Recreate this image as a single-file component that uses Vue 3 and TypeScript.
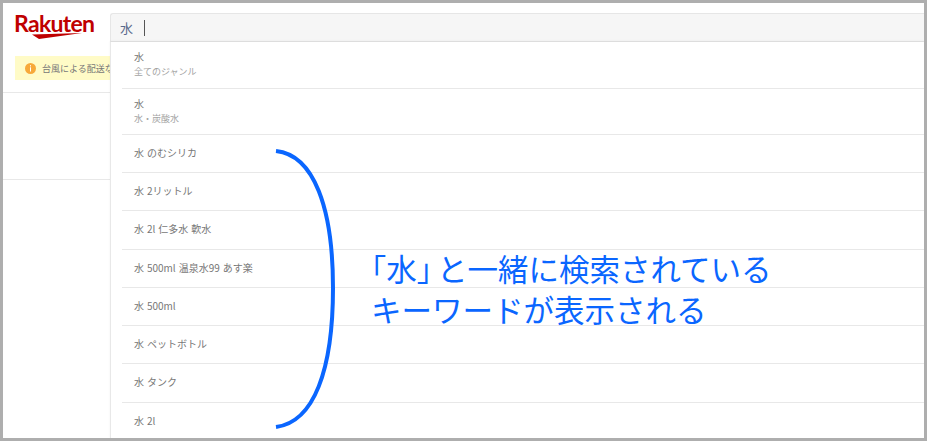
<template>
  <div class="frame">
    <aside class="side">
      <div class="logo">
        <span class="logo-word">Rakuten</span>
        <svg class="logo-bar" width="50" height="7" viewBox="0 0 50 7">
          <polygon points="0,1.5 50,0 7,6" fill="#bf0000" />
        </svg>
      </div>
      <div class="notice">
        <svg class="notice-icon" width="11" height="11" viewBox="0 0 11 11">
          <circle cx="5.5" cy="5.5" r="5.5" fill="#f7a93a" />
          <rect x="5" y="2.2" width="1" height="1.2" fill="#fff" />
          <rect x="5" y="4.3" width="1" height="4.2" fill="#fff" />
        </svg>
        <span class="notice-text">台風による配送な</span>
      </div>
      <div class="side-block"></div>
    </aside>

    <main class="search">
      <div class="search-box">
        <span class="query">水</span>
        <span class="caret"></span>
      </div>
      <ul class="suggest">
        <li
          v-for="item in items"
          :key="item.label + item.sub"
          class="row"
          :class="{ 'row-double': item.sub }"
          :style="{ height: item.h + 'px' }"
        >
          <span class="label">{{ item.label }}</span>
          <span v-if="item.sub" class="sub">{{ item.sub }}</span>
        </li>
      </ul>
    </main>

    <svg class="bracket" width="70" height="290" viewBox="0 0 70 290">
      <path
        d="M2 3 C40 7 59 60 59 140 C59 222 40 274 2 279"
        fill="none"
        stroke="#0a66ff"
        stroke-width="4"
      />
    </svg>
    <p class="note"><span class="bracket-char">「</span>水<span class="bracket-char close">」</span>と一緒に検索されている<br />キーワードが表示される</p>
  </div>
</template>

<script setup lang="ts">
interface Suggestion {
  label: string
  sub?: string
  h: number
}

const items: Suggestion[] = [
  { label: '水', sub: '全てのジャンル', h: 47 },
  { label: '水', sub: '水・炭酸水', h: 46 },
  { label: '水 のむシリカ', h: 38 },
  { label: '水 2リットル', h: 38 },
  { label: '水 2l 仁多水 軟水', h: 39 },
  { label: '水 500ml 温泉水99 あす楽', h: 38 },
  { label: '水 500ml', h: 38 },
  { label: '水 ペットボトル', h: 38 },
  { label: '水 タンク', h: 39 },
  { label: '水 2l', h: 36 },
]
</script>

<style>
html,
body {
  margin: 0;
  overflow: hidden;
}
</style>

<style scoped>
.frame {
  position: relative;
  box-sizing: border-box;
  display: flex;
  width: 927px;
  height: 441px;
  border: 3px solid #aeaeae;
  background: #fff;
  overflow: hidden;
  font-family: "Noto Sans CJK JP", "Noto Sans", sans-serif;
}

.side {
  flex: 0 0 107px;
  min-width: 0;
  display: flex;
  flex-direction: column;
}

.logo {
  height: 53px;
  padding: 8px 0 0 11px;
  box-sizing: border-box;
  position: relative;
}

.logo-word {
  display: block;
  font-family: Lato, "Liberation Sans", sans-serif;
  font-weight: 700;
  font-size: 23px;
  line-height: 24px;
  letter-spacing: -0.7px;
  color: #bf0000;
}

.logo-bar {
  position: absolute;
  left: 29px;
  top: 30px;
}

.notice {
  margin-left: 12px;
  height: 24px;
  display: flex;
  align-items: center;
  gap: 6px;
  padding-left: 10px;
  background: #fffbc7;
  overflow: hidden;
  white-space: nowrap;
}

.notice-icon {
  flex: none;
}

.notice-text {
  font-size: 9px;
  color: #777;
}

.side-block {
  margin-top: 12px;
  height: 88px;
  box-sizing: border-box;
  border-top: 1px solid #e8e8e8;
  border-bottom: 1px solid #e8e8e8;
}

.search {
  flex: 1;
  min-width: 0;
  padding-top: 10px;
}

.search-box {
  box-sizing: border-box;
  height: 29px;
  display: flex;
  align-items: center;
  padding-left: 9px;
  background: #f6f6f6;
  border: 1px solid #e6e6e6;
  border-right: 0;
  border-radius: 3px 0 0 0;
}

.query {
  font-size: 13px;
  color: #5a6a8c;
}

.caret {
  width: 1px;
  height: 16px;
  margin-left: 11px;
  background: #555;
}

.suggest {
  list-style: none;
  margin: 0;
  padding: 0 0 0 11px;
  border-left: 1px solid #e8e8e8;
  box-shadow: 0 -1px 2px rgba(0, 0, 0, 0.06);
}

.row {
  box-sizing: border-box;
  display: flex;
  flex-direction: column;
  padding: 10px 0 0 12px;
  border-bottom: 1px solid #e8e8e8;
}

.row:last-child {
  border-bottom: 0;
}

.row-double {
  padding-top: 7px;
}

.label {
  font-size: 10px;
  line-height: 15px;
  word-spacing: 0.7px;
  color: #777;
}

.sub {
  margin-top: 1px;
  font-size: 9px;
  line-height: 13px;
  color: #a3a3a3;
}

.bracket {
  position: absolute;
  left: 271px;
  top: 145px;
}

.note {
  position: absolute;
  left: 368px;
  top: 245px;
  margin: 0;
  font-size: 30.5px;
  line-height: 41px;
  white-space: nowrap;
  color: #0a66ff;
}

.bracket-char {
  font-feature-settings: "halt";
}

.close {
  margin-right: 5px;
}
</style>
